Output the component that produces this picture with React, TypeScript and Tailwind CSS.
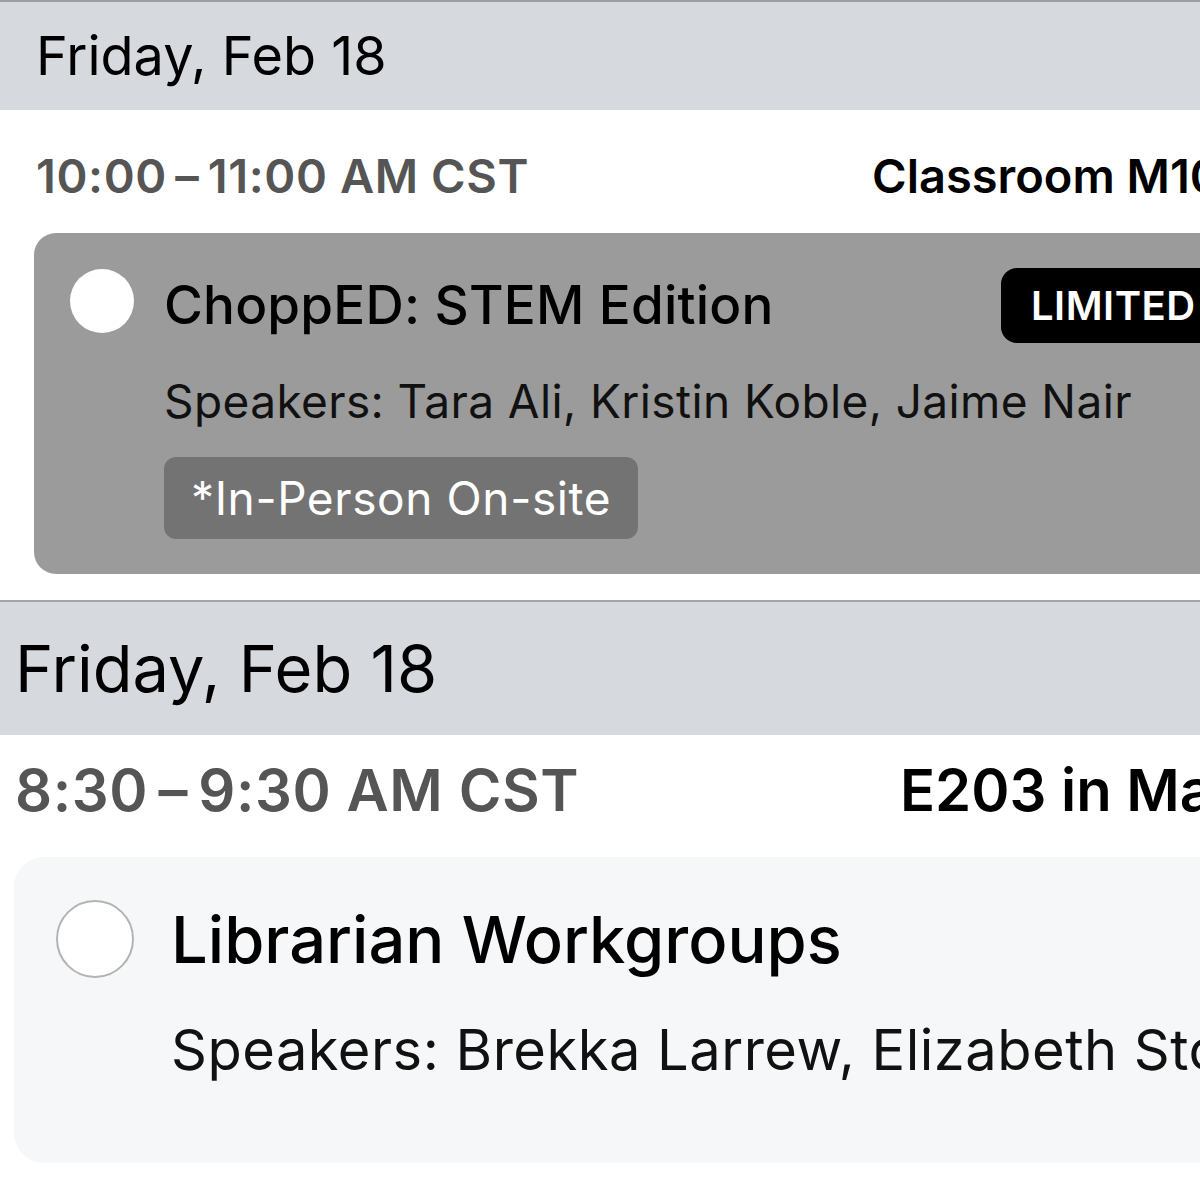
const font = { fontFamily: "Inter, 'Noto Sans', sans-serif" }

export default function App() {
  return (
    <div className="h-[1200px] w-[1200px] overflow-hidden bg-white" style={font}>
      {/* first capture */}
      <section className="h-[600px] overflow-hidden">
        <div className="flex h-[110px] items-center border-t-2 border-[#9c9ea2] bg-[#d6d9de] pl-[36px]">
          <span className="text-[54px] leading-none text-black">Friday, Feb 18</span>
        </div>
        <div className="flex items-center pt-[44px] pb-[35px] pl-[36px]">
          <span className="w-[836px] shrink-0 text-[47px] leading-[44px] font-semibold tracking-[0.6px] text-[#555555]">10:00{"\u2009–\u2009"}11:00 AM CST</span>
          <span className="whitespace-nowrap text-[47px] leading-[44px] font-semibold text-black">Classroom M104</span>
        </div>
        <div className="ml-[34px] flex w-[1250px] shrink-0 gap-[30px] rounded-[22px] bg-[#9b9b9b] pt-[35px] pb-[35px] pl-[36px]">
          <div className="mt-[1px] h-[64px] w-[64px] shrink-0 rounded-full bg-white" />
          <div className="flex flex-1 flex-col">
            <div className="flex h-[75px] items-center">
              <span className="w-[837px] shrink-0 text-[53px] leading-none font-medium tracking-[0.2px] text-black">ChoppED: STEM Edition</span>
              <span className="flex h-[75px] items-center rounded-[16px] bg-black px-[30px] text-[40px] font-semibold tracking-[0.5px] text-white">LIMITED</span>
            </div>
            <p className="mt-[30px] text-[46px] leading-[56px] tracking-[0.4px] text-[#111111]">Speakers: Tara Ali, Kristin Koble, Jaime Nair</p>
            <div className="mt-[28px] flex">
              <span className="flex h-[82px] items-center rounded-[12px] bg-[#737373] px-[27px] text-[46px] tracking-[0.6px] text-white">*In-Person On-site</span>
            </div>
          </div>
        </div>
      </section>

      {/* second capture, larger */}
      <section className="h-[600px] overflow-hidden">
        <div className="flex h-[135px] items-center border-t-2 border-[#a2a4a8] bg-[#d6d9de] pl-[15px]">
          <span className="text-[65px] leading-none text-black">Friday, Feb 18</span>
        </div>
        <div className="flex items-center pt-[28px] pb-[40px] pl-[15px]">
          <span className="w-[885px] shrink-0 text-[58px] leading-[54px] font-semibold tracking-[0.6px] text-[#555555]">8:30{"\u2009–\u2009"}9:30 AM CST</span>
          <span className="whitespace-nowrap text-[58px] leading-[54px] font-semibold text-black">E203 in Main Building</span>
        </div>
        <div className="ml-[14px] flex h-[306px] w-[1250px] gap-[37px] rounded-[30px] bg-[#f6f7f9] pt-[43px] pl-[42px]">
          <div className="h-[78px] w-[78px] shrink-0 rounded-full border-2 border-[#b3b3b3] bg-white" />
          <div className="flex flex-col">
            <span className="flex h-[78px] items-center text-[65px] leading-none font-medium whitespace-nowrap text-black">Librarian Workgroups</span>
            <p className="mt-[38px] text-[56px] leading-[68px] tracking-[0.5px] whitespace-nowrap text-[#111111]">Speakers: Brekka Larrew, Elizabeth Stone</p>
          </div>
        </div>
      </section>
    </div>
  )
}
